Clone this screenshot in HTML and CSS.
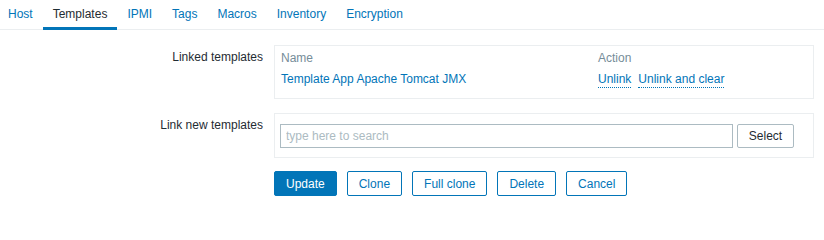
FILE: index.html
```html
<!DOCTYPE html>
<html>
<head>
<meta charset="utf-8">
<link rel="stylesheet" href="styles.css">
</head>
<body>
<nav class="tabs">
  <a class="tab">Host</a>
  <a class="tab active">Templates</a>
  <a class="tab">IPMI</a>
  <a class="tab">Tags</a>
  <a class="tab">Macros</a>
  <a class="tab">Inventory</a>
  <a class="tab">Encryption</a>
</nav>
<form class="form">
  <div class="row">
    <div class="label">Linked templates</div>
    <div class="box linked">
      <div class="tbl">
        <div class="th">Name</div>
        <div class="th">Action</div>
        <div class="td"><a class="link">Template App Apache Tomcat JMX</a></div>
        <div class="td actions"><a class="link dotted">Unlink</a><a class="link dotted">Unlink and clear</a></div>
      </div>
    </div>
  </div>
  <div class="row">
    <div class="label">Link new templates</div>
    <div class="box search">
      <input class="input" type="text" placeholder="type here to search">
      <button type="button" class="btn-grey">Select</button>
    </div>
  </div>
  <div class="buttons">
    <button type="button" class="btn primary">Update</button>
    <button type="button" class="btn">Clone</button>
    <button type="button" class="btn">Full clone</button>
    <button type="button" class="btn">Delete</button>
    <button type="button" class="btn">Cancel</button>
  </div>
</form>
</body>
</html>
```
FILE: styles.css
```css
html, body {
  margin: 0;
  padding: 0;
  background: #ffffff;
}
body {
  font-family: "Liberation Sans", Arial, sans-serif;
  font-size: 12px;
  line-height: 14px;
  color: #1f2c33;
}
.tabs {
  display: flex;
  height: 29px;
  border-bottom: 1px solid #ebeef0;
  margin-left: -2px;
}
.tab {
  display: block;
  padding: 7px 10px 6px;
  height: 14px;
  border-bottom: 3px solid transparent;
  color: #0275b8;
  cursor: pointer;
}
.tab.active {
  color: #1f2c33;
  border-bottom-color: #0275b8;
}
.form {
  padding-top: 15px;
  width: 814px;
}
.row {
  display: grid;
  grid-template-columns: 264px 1fr;
  column-gap: 10px;
  margin-bottom: 14px;
}
.label {
  text-align: right;
  padding-top: 5px;
  padding-right: 1px;
}
.box {
  border: 1px solid #ebeef0;
}
.linked {
  padding: 5px 6px 10px;
}
.tbl {
  display: grid;
  grid-template-columns: 317px 1fr;
}
.th {
  color: #768d99;
  padding-bottom: 7px;
}
.td {
  white-space: nowrap;
}
.link {
  color: #0275b8;
  text-decoration: none;
  cursor: pointer;
}
.actions {
  display: flex;
  gap: 7px;
}
.dotted {
  border-bottom: 1px dotted #0275b8;
  padding-bottom: 1px;
}
.search {
  display: flex;
  align-items: center;
  gap: 4px;
  padding: 10px 5px 9px;
}
.input {
  box-sizing: border-box;
  width: 453px;
  height: 24px;
  margin: 0;
  border: 1px solid #acbbc2;
  border-radius: 0;
  padding: 0 5px;
  font-family: inherit;
  font-size: 12px;
  color: #1f2c33;
  background: #fff;
  outline: none;
}
.input::placeholder {
  color: #acbbc2;
}
.btn-grey {
  box-sizing: border-box;
  height: 24px;
  width: 57px;
  margin: 0;
  padding: 0;
  border: 1px solid #acbbc2;
  border-radius: 2px;
  background: #fff;
  color: #1f2c33;
  font-family: inherit;
  font-size: 12px;
}
.buttons {
  display: flex;
  gap: 10px;
  margin-left: 274px;
  margin-top: -1px;
}
.btn {
  box-sizing: border-box;
  height: 25px;
  margin: 0;
  padding: 0 11px;
  border: 1px solid #0275b8;
  border-radius: 2px;
  background: #fff;
  color: #0275b8;
  font-family: inherit;
  font-size: 12px;
}
.btn.primary {
  background: #0275b8;
  color: #fff;
}
```
